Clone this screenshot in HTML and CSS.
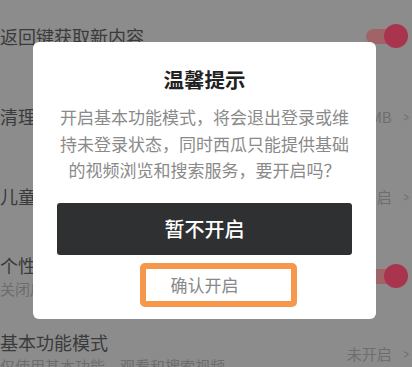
FILE: index.html
```html
<!DOCTYPE html>
<html>
<head>
    <meta charset="UTF-8">
    <title>设置</title>
    <link rel="stylesheet" href="styles.css">
</head>
<body>
    <div class="settings">
        <div class="row">
            <div class="label"><div class="title">返回键获取新内容</div></div>
            <span class="switch"><i></i></span>
        </div>
        <div class="row">
            <div class="label"><div class="title">清理缓存</div></div>
            <span class="value">36.5MB</span><span class="arrow">&gt;</span>
        </div>
        <div class="row">
            <div class="label"><div class="title">儿童模式</div></div>
            <span class="value">未开启</span><span class="arrow">&gt;</span>
        </div>
        <div class="row">
            <div class="label">
                <div class="title">个性化推荐</div>
                <div class="sub">关闭后将不再为你推荐个性化内容</div>
            </div>
            <span class="switch"><i></i></span>
        </div>
        <div class="row last">
            <div class="label">
                <div class="title">基本功能模式</div>
                <div class="sub">仅使用基本功能，观看和搜索视频</div>
            </div>
            <span class="value">未开启</span><span class="arrow">&gt;</span>
        </div>
    </div>

    <!-- 弹窗 -->
    <div class="mask">
        <div class="dialog">
            <h3 class="dialog-title">温馨提示</h3>
            <p class="dialog-text">开启基本功能模式，将会退出登录或维持未登录状态，同时西瓜只能提供基础的视频浏览和搜索服务，要开启吗？</p>
            <div class="btn-cancel">暂不开启</div>
            <div class="btn-confirm">
                确认开启
                <span class="mark"></span>
            </div>
        </div>
    </div>
</body>
</html>
```

FILE: styles.css
```css
* {
    margin: 0;
    padding: 0;
    box-sizing: border-box;
}
body {
    width: 412px;
    height: 367px;
    overflow: hidden;
    font-family: "Noto Sans CJK SC", "Noto Sans", sans-serif;
    background-color: #8c8c8c;
    color: #3a3a3a;
}
.settings {
    margin-top: -4px;
}
.row {
    display: flex;
    align-items: center;
    height: 80px;
}
.row.last {
    height: 74px;
}
.label {
    flex: 1;
    min-width: 0;
    white-space: nowrap;
}
.title {
    font-size: 18px;
    line-height: 26px;
    color: #3a3a3a;
}
.sub {
    font-size: 15px;
    line-height: 22px;
    color: #6c6c6c;
}
.value {
    font-size: 15px;
    color: #6e6e6e;
    margin-right: 10px;
}
.arrow {
    font-size: 15px;
    color: #6e6e6e;
    margin-right: 2px;
    transform: scaleX(0.6);
}
.switch {
    position: relative;
    width: 44px;
    height: 24px;
    margin-right: 2px;
}
.switch:before {
    content: "";
    position: absolute;
    left: 0;
    top: 5px;
    width: 36px;
    height: 15px;
    border-radius: 8px;
    background-color: #a06466;
}
.switch i {
    position: absolute;
    right: 2px;
    top: 0;
    width: 24px;
    height: 24px;
    border-radius: 50%;
    background-color: #a9344d;
}

.mask {
    position: fixed;
    left: 0;
    top: 0;
    width: 100%;
    height: 100%;
    display: flex;
    justify-content: center;
    align-items: flex-start;
    padding: 42px 3px 0 0;
}
.dialog {
    width: 343px;
    background-color: #fff;
    border-radius: 6px;
    padding: 23px 24px 12px;
    text-align: center;
}
.dialog-title {
    font-size: 20.5px;
    line-height: 28px;
    font-weight: bold;
    color: #222;
}
.dialog-text {
    margin-top: 11px;
    font-size: 17px;
    line-height: 26.5px;
    color: #8a8a8a;
}
.btn-cancel {
    margin-top: 19px;
    height: 52px;
    line-height: 52px;
    background-color: #2f3031;
    border-radius: 3px;
    font-size: 20px;
    font-weight: 500;
    color: #fff;
}
.btn-confirm {
    position: relative;
    margin-top: 8px;
    height: 44px;
    line-height: 44px;
    font-size: 17px;
    color: #888;
}
.mark {
    position: absolute;
    left: 83px;
    top: 0;
    width: 157px;
    height: 44px;
    border: 6px solid #f5984b;
    border-radius: 5px;
}
```
